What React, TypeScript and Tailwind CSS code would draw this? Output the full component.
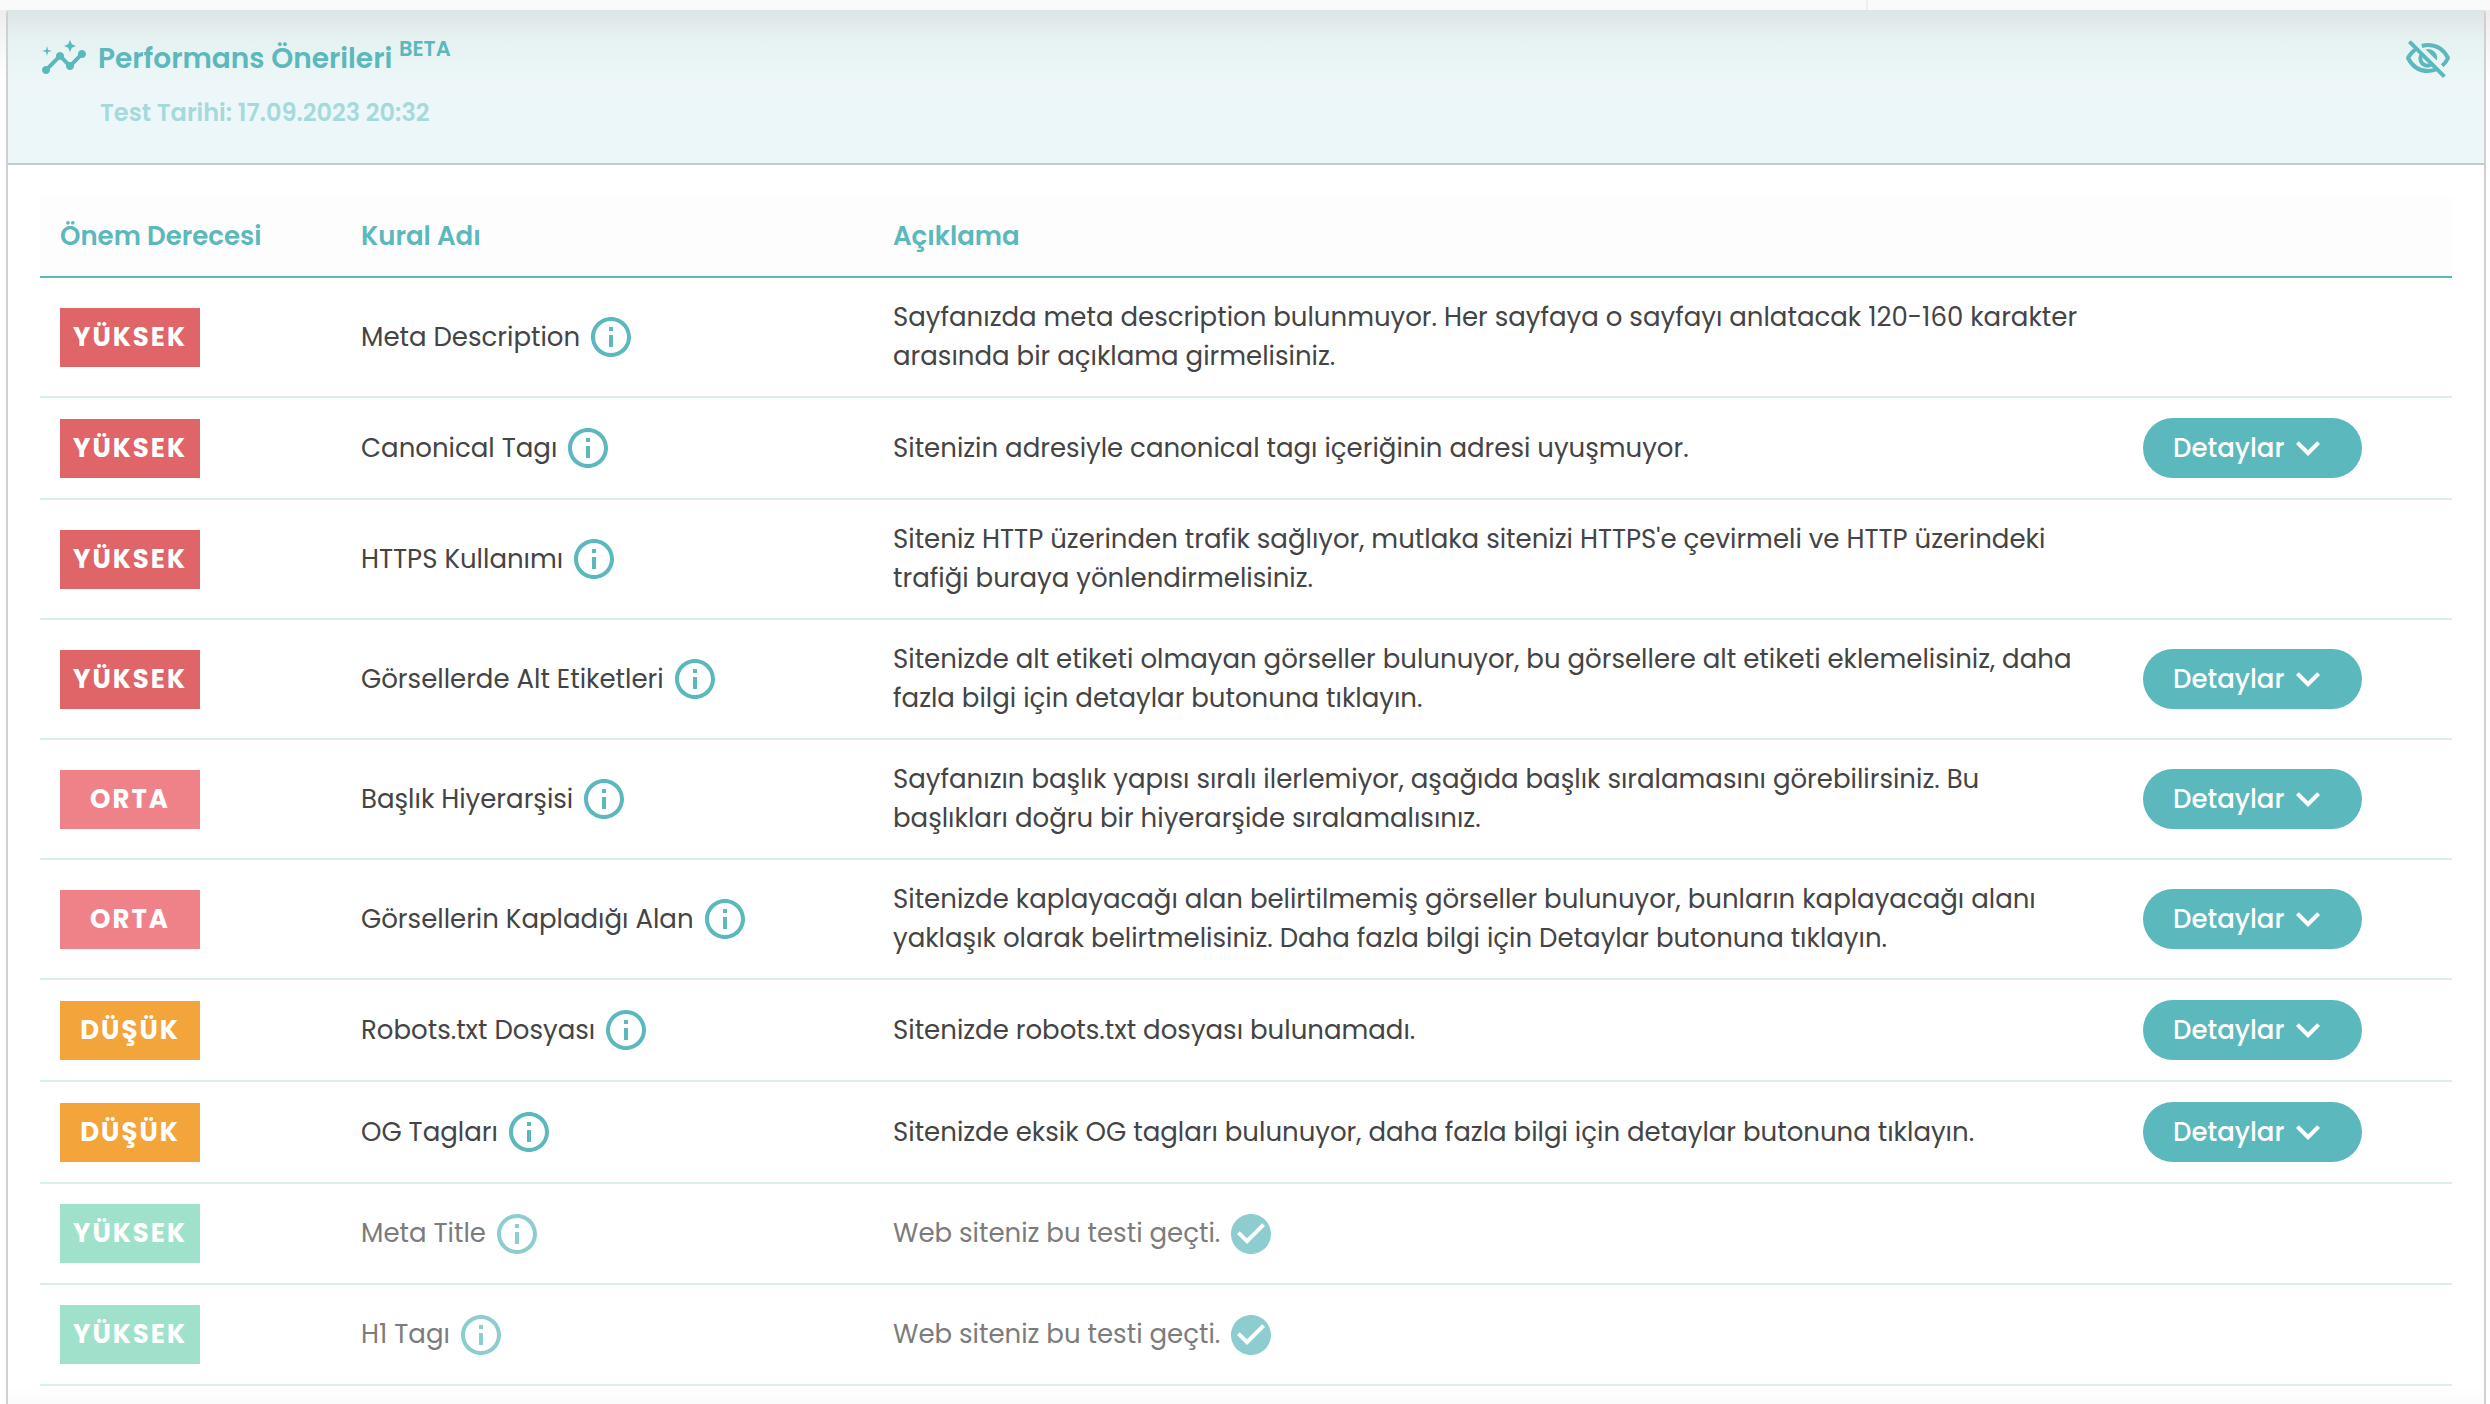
import type { ReactNode } from 'react';
import { MdCheckCircle, MdInfoOutline, MdInsights, MdKeyboardArrowDown } from 'react-icons/md';

type Level = 'high' | 'medium' | 'low' | 'passed';

interface Rule {
  level: Level;
  label: string;
  name: string;
  description: string;
  details?: boolean;
}

const levelColors: Record<Level, string> = {
  high: 'bg-[#df6568]',
  medium: 'bg-[#ef8188]',
  low: 'bg-[#f3a43b]',
  passed: 'bg-[#9fe1cb]',
};

const rules: Rule[] = [
  {
    level: 'high',
    label: 'YÜKSEK',
    name: 'Meta Description',
    description:
      'Sayfanızda meta description bulunmuyor. Her sayfaya o sayfayı anlatacak 120-160 karakter arasında bir açıklama girmelisiniz.',
  },
  {
    level: 'high',
    label: 'YÜKSEK',
    name: 'Canonical Tagı',
    description: 'Sitenizin adresiyle canonical tagı içeriğinin adresi uyuşmuyor.',
    details: true,
  },
  {
    level: 'high',
    label: 'YÜKSEK',
    name: 'HTTPS Kullanımı',
    description:
      "Siteniz HTTP üzerinden trafik sağlıyor, mutlaka sitenizi HTTPS'e çevirmeli ve HTTP üzerindeki trafiği buraya yönlendirmelisiniz.",
  },
  {
    level: 'high',
    label: 'YÜKSEK',
    name: 'Görsellerde Alt Etiketleri',
    description:
      'Sitenizde alt etiketi olmayan görseller bulunuyor, bu görsellere alt etiketi eklemelisiniz, daha fazla bilgi için detaylar butonuna tıklayın.',
    details: true,
  },
  {
    level: 'medium',
    label: 'ORTA',
    name: 'Başlık Hiyerarşisi',
    description:
      'Sayfanızın başlık yapısı sıralı ilerlemiyor, aşağıda başlık sıralamasını görebilirsiniz. Bu başlıkları doğru bir hiyerarşide sıralamalısınız.',
    details: true,
  },
  {
    level: 'medium',
    label: 'ORTA',
    name: 'Görsellerin Kapladığı Alan',
    description:
      'Sitenizde kaplayacağı alan belirtilmemiş görseller bulunuyor, bunların kaplayacağı alanı yaklaşık olarak belirtmelisiniz. Daha fazla bilgi için Detaylar butonuna tıklayın.',
    details: true,
  },
  {
    level: 'low',
    label: 'DÜŞÜK',
    name: 'Robots.txt Dosyası',
    description: 'Sitenizde robots.txt dosyası bulunamadı.',
    details: true,
  },
  {
    level: 'low',
    label: 'DÜŞÜK',
    name: 'OG Tagları',
    description: 'Sitenizde eksik OG tagları bulunuyor, daha fazla bilgi için detaylar butonuna tıklayın.',
    details: true,
  },
  { level: 'passed', label: 'YÜKSEK', name: 'Meta Title', description: 'Web siteniz bu testi geçti.' },
  { level: 'passed', label: 'YÜKSEK', name: 'H1 Tagı', description: 'Web siteniz bu testi geçti.' },
];

function EyeOffIcon() {
  return (
    <svg
      width="48"
      height="48"
      viewBox="0 0 24 24"
      fill="none"
      stroke="currentColor"
      strokeWidth="2"
      strokeLinejoin="round"
      aria-hidden="true"
    >
      <path d="M2.7 3.8 20.2 21.3" />
      <path d="M6 7.5C4.2 8.8 2.7 10.5 2 12c2 4 5.6 6.5 10 6.5 1.8 0 3.4-.4 4.8-1.1" />
      <path d="M8.9 6c1-.3 2-.5 3.1-.5 4.4 0 8 2.5 10 6.5-.6 1.4-1.5 2.7-2.9 3.900" />
      <path d="M9.2 9.8A3.5 3.5 0 0 0 14.2 14.8" />
      <path d="M10.8 7.7A4.5 4.5 0 0 1 16.4 13.3Z" fill="currentColor" stroke="none" />
    </svg>
  );
}

function HeadCell({ children }: { children: ReactNode }) {
  return <th className="h-20 px-5 text-left font-semibold">{children}</th>;
}

function RuleRow({ rule }: { rule: Rule }) {
  const passed = rule.level === 'passed';
  const iconColor = passed ? 'text-[#8dcdcf]' : 'text-[#5bb8bc]';

  return (
    <tr className={`border-b-2 border-[#d8efed] ${passed ? 'text-[#7c7c7c]' : 'text-[#444444]'}`}>
      <td className="p-5">
        <span
          className={`flex h-[59px] w-[140px] items-center justify-center font-bold tracking-[2px] text-white ${levelColors[rule.level]}`}
        >
          {rule.label}
        </span>
      </td>
      <td className="px-5">
        <div className="flex items-center gap-[7px]">
          {rule.name}
          <button type="button" aria-label={`${rule.name} bilgi`} className={iconColor}>
            <MdInfoOutline size={48} />
          </button>
        </div>
      </td>
      <td className="py-5 pr-10 pl-5">
        {passed ? (
          <div className="flex items-center gap-[7px]">
            {rule.description}
            <MdCheckCircle size={48} className={iconColor} />
          </div>
        ) : (
          rule.description
        )}
      </td>
      <td className={rule.details ? 'p-5' : 'px-5'}>
        {rule.details && (
          <button
            type="button"
            className="flex h-[60px] w-[219px] items-center rounded-full bg-[#5bb8bc] pl-[30px] font-medium text-white"
          >
            Detaylar
            <MdKeyboardArrowDown size={48} />
          </button>
        )}
      </td>
    </tr>
  );
}

export default function App() {
  return (
    <div className="flex min-h-screen flex-col bg-white font-['Poppins','Inter',sans-serif] text-[26px] leading-[39px]">
      {/* Bottom edge of the sticky top bar */}
      <div className="flex h-[10px] bg-[#fafafa]">
        <div className="w-3/4 border-r-2 border-[#eeeeee]" />
      </div>

      <div className="flex grow bg-linear-to-b from-[#eeeeee] to-white to-[70px] pr-1 pl-1.5">
        <section className="flex grow flex-col rounded-t-sm border-x-2 border-[#d0d0d0] bg-white">
          {/* Header */}
          <header className="flex h-[155px] items-start justify-between border-b-2 border-[#c0cbcd] bg-linear-to-b from-[#dde5e6] via-[#e6f2f1] via-[30px] to-[#edf7f9] to-[75px] px-8 pt-6 text-[#5bb8bc]">
            <div className="flex flex-col gap-[15px]">
              <h1 className="flex h-12 items-center gap-2.5 text-[28px] font-semibold">
                <MdInsights size={48} />
                <span>
                  Performans Önerileri <sup className="-top-3 text-[21px] leading-none">BETA</sup>
                </span>
              </h1>
              <p className="pl-[60px] text-2xl font-semibold text-[#a5d9db]">Test Tarihi: 17.09.2023 20:32</p>
            </div>
            <button type="button" aria-label="Gizle">
              <EyeOffIcon />
            </button>
          </header>

          {/* Rules */}
          <div className="px-8 pt-8">
            <table className="w-full table-fixed border-collapse">
              <colgroup>
                <col className="w-[301px]" />
                <col className="w-[532px]" />
                <col />
                <col className="w-[329px]" />
              </colgroup>
              <thead>
                <tr className="border-b-2 border-[#5bb8bc] bg-[#fdfdfd] text-[#5bb8bc]">
                  <HeadCell>Önem Derecesi</HeadCell>
                  <HeadCell>Kural Adı</HeadCell>
                  <HeadCell>Açıklama</HeadCell>
                  <td />
                </tr>
              </thead>
              <tbody>
                {rules.map((rule) => (
                  <RuleRow key={rule.name} rule={rule} />
                ))}
              </tbody>
            </table>
          </div>
          <div className="grow bg-linear-to-b from-white to-[#fbfbfb]" />
        </section>
      </div>
    </div>
  );
}
